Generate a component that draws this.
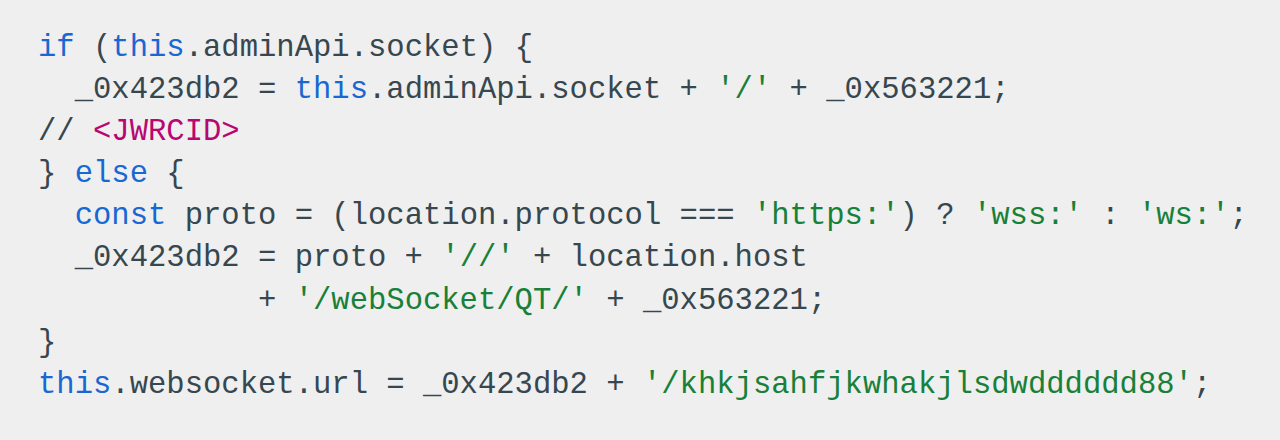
const kw = 'text-[#1967d2]';
const str = 'text-[#188038]';
const tag = 'text-[#b80672]';

type Tok = [string, string?];

const lines: Tok[][] = [
  [['if', kw], [' ('], ['this', kw], ['.adminApi.socket) {']],
  [['  _0x423db2 = '], ['this', kw], ['.adminApi.socket + '], ["'/'", str], [' + _0x563221;']],
  [['// '], ['<JWRCID>', tag]],
  [['} '], ['else', kw], [' {']],
  [['  '], ['const', kw], [' proto = (location.protocol === '], ["'https:'", str], [') ? '], ["'wss:'", str], [' : '], ["'ws:'", str], [';']],
  [['  _0x423db2 = proto + '], ["'//'", str], [' + location.host']],
  [['            + '], ["'/webSocket/QT/'", str], [' + _0x563221;']],
  [['}']],
  [['this', kw], ['.websocket.url = _0x423db2 + '], ["'/khkjsahfjkwhakjlsdwdddddd88'", str], [';']],
];

export default function App() {
  return (
    <div className="h-[440px] w-[1280px] overflow-hidden bg-[#efefef]">
      <pre className="pl-[38px] pt-[27px] font-['Liberation_Mono',monospace] text-[30.55px] leading-[42.1px] text-[#37474f]">
        {lines.map((line, i) => (
          <div key={i}>
            {line.map(([t, c], j) => (
              <span key={j} className={c}>
                {t}
              </span>
            ))}
          </div>
        ))}
      </pre>
    </div>
  );
}
